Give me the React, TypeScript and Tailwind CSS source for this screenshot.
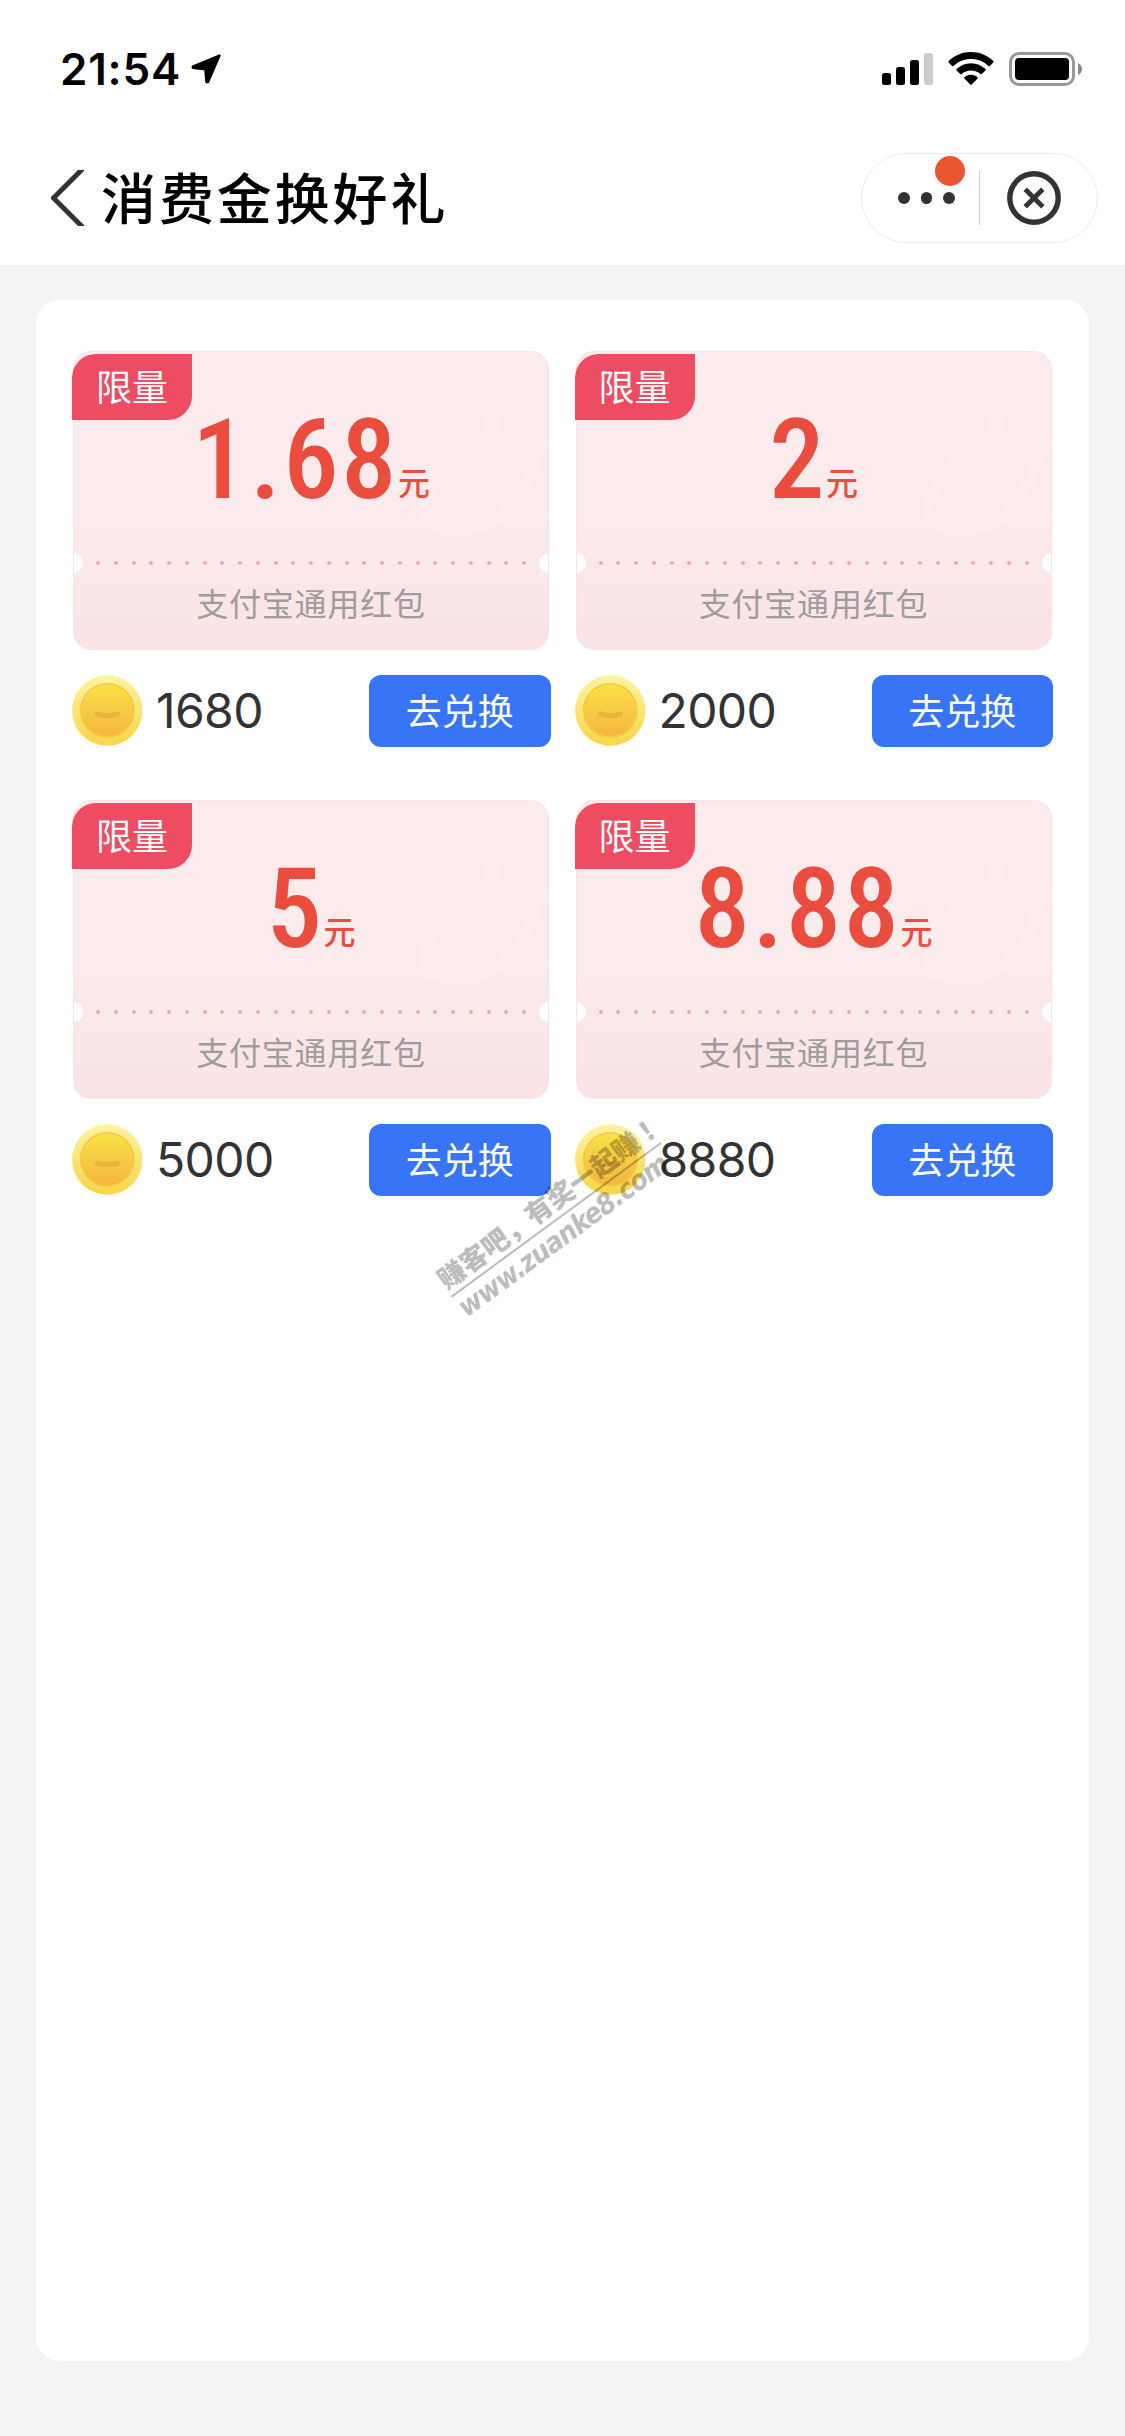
type CouponProps = {
  amount: string;
  title: string;
  coins: number;
};

const coupons: CouponProps[] = [
  { amount: "1.68", title: "支付宝通用红包", coins: 1680 },
  { amount: "2", title: "支付宝通用红包", coins: 2000 },
  { amount: "5", title: "支付宝通用红包", coins: 5000 },
  { amount: "8.88", title: "支付宝通用红包", coins: 8880 },
];

export default function App() {
  return (
    <div className="relative flex h-[2436px] w-[1125px] flex-col overflow-hidden bg-[#f4f4f4] font-['Inter','Noto_Sans_CJK_SC',sans-serif]">
      <header className="h-[265px] bg-white">
        <StatusBar />
        <NavBar />
      </header>
      <main className="mx-9 mt-[35px] h-[2061px] rounded-[24px] bg-white px-9 pt-[51px]">
        <div className="grid grid-cols-2 gap-x-6 gap-y-[53px]">
          {coupons.map((item) => (
            <Coupon key={item.coins} {...item} />
          ))}
        </div>
      </main>
      <Watermark />
    </div>
  );
}

function StatusBar() {
  return (
    <div className="flex h-[138px] items-center justify-between pr-[42px] pl-[60px]">
      <div className="flex items-center">
        <span className="text-[44px] leading-none font-semibold tracking-[0.8px] text-black">21:54</span>
        <svg className="ml-[9px]" width="32" height="32" viewBox="0 0 32 32">
          <path
            d="M29.5 2.5 L18 29 L16.4 29 L15.4 16.2 L2.8 14.8 L2.8 13.6 Z"
            fill="#000"
            stroke="#000"
            strokeWidth="2.4"
            strokeLinejoin="round"
          />
        </svg>
      </div>
      <div className="flex items-center">
        <svg width="51" height="32" viewBox="0 0 51 32">
          <rect x="0" y="20" width="9" height="12" rx="2.5" />
          <rect x="14" y="14" width="9" height="18" rx="2.5" />
          <rect x="28" y="7" width="9" height="25" rx="2.5" />
          <rect x="42" y="0" width="9" height="32" rx="2.5" fill="#ccc" />
        </svg>
        <svg className="ml-[15px]" width="46" height="34" viewBox="0 0 46 34">
          <path d="M23 0 C31.6 0 39.6 3.4 45.3 9 Q46 9.8 45.3 10.6 L41.9 14 Q41.2 14.6 40.5 14 C35.8 9.6 29.6 7 23 7 C16.4 7 10.2 9.6 5.5 14 Q4.8 14.6 4.1 14 L0.7 10.6 Q0 9.8 0.7 9 C6.4 3.4 14.4 0 23 0 Z" />
          <path d="M23 11.2 C28.6 11.2 33.7 13.4 37.4 17 Q38.1 17.8 37.4 18.5 L33.8 22 Q33.1 22.6 32.4 22 C29.9 19.7 26.6 18.4 23 18.4 C19.4 18.4 16.1 19.7 13.6 22 Q12.9 22.6 12.2 22 L8.6 18.5 Q7.9 17.8 8.6 17 C12.3 13.4 17.4 11.2 23 11.2 Z" />
          <path d="M23 22.8 C25.6 22.8 27.9 23.7 29.6 25.2 Q30.2 25.9 29.6 26.6 L23.7 32.5 Q23 33.2 22.3 32.5 L16.4 26.6 Q15.8 25.9 16.4 25.2 C18.1 23.7 20.4 22.8 23 22.8 Z" />
        </svg>
        <svg className="ml-[15px]" width="74" height="34" viewBox="0 0 74 34">
          <rect x="1.5" y="1.5" width="63" height="31" rx="8.5" fill="none" stroke="#999" strokeWidth="3" />
          <rect x="6" y="6" width="54" height="22" rx="4" />
          <path d="M69 11 Q73 13 73 17 Q73 21 69 23 Z" fill="#8a8a8a" />
        </svg>
      </div>
    </div>
  );
}

function NavBar() {
  return (
    <div className="flex h-[120px] items-center justify-between pr-[27px] pl-[51px]">
      <div className="flex items-center">
        <svg width="33" height="56" viewBox="0 0 33 56">
          <path d="M27 0 L33 0 L33 1 L6 28 L33 55 L33 56 L27 56 L0 29 L0 27 Z" fill="#333" />
        </svg>
        <h1 className="ml-[17px] pb-[6px] font-['Noto_Sans_CJK_SC',sans-serif] text-[55px] leading-[60px] font-medium tracking-[2.9px] text-black">
          消费金换好礼
        </h1>
      </div>
      <div className="relative flex h-[90px] w-[237px] items-center rounded-full border border-[#ebebeb]">
        <div className="flex w-[117px] items-center justify-center gap-[11px] pl-[12px]">
          <i className="h-[12px] w-[11.5px] rounded-full bg-[#333]" />
          <i className="h-[12px] w-[11.5px] rounded-full bg-[#333]" />
          <i className="h-[12px] w-[11.5px] rounded-full bg-[#333]" />
        </div>
        <span className="absolute top-[2px] left-[73px] size-[30px] rounded-full bg-[#ea5532]" />
        <span className="h-[54px] w-px bg-[#ccc]" />
        <svg className="ml-[27px]" width="54" height="54" viewBox="0 0 54 54" fill="none" stroke="#333">
          <circle cx="27" cy="27" r="24.2" strokeWidth="5.4" />
          <path d="M18.2 18.2 L35.8 35.8 M35.8 18.2 L18.2 35.8" strokeWidth="4.8" />
        </svg>
      </div>
    </div>
  );
}

function Coupon({ amount, title, coins }: CouponProps) {
  return (
    <div>
      <div className="relative h-[299px] pr-[1.5px] pl-px">
        <div className="relative flex h-full flex-col overflow-hidden rounded-[18px] border border-[#f9e3e4] bg-linear-to-b from-[#fcebec] from-55% to-[#f9e3e5]">
          <AlipayMark />
          <div className="flex h-[202px] items-end justify-center pb-[53px] text-[#ea4d3d]">
            <span className="font-['Roboto',sans-serif] text-[111px] leading-[82px] font-medium tracking-[2.4px] [font-stretch:75%]">
              {amount}
            </span>
            <span className="-ml-px pb-[2px] font-['Noto_Sans_CJK_SC',sans-serif] text-[32px] leading-[36px] font-medium">元</span>
          </div>
          <div className="flex h-[18px] items-center justify-between px-[22px]">
            {Array.from({ length: 25 }, (_, i) => (
              <i key={i} className="h-[3.5px] w-[4px] rounded-full bg-[#f5aba5]" />
            ))}
          </div>
          <p className="mt-[7px] text-center font-['Noto_Sans_CJK_SC',sans-serif] text-[32px] leading-[46px] tracking-[0.8px] text-[#a09c9c]">
            {title}
          </p>
          <span className="absolute top-[201px] -left-[11px] size-[20px] rounded-full bg-white" />
          <span className="absolute top-[201px] -right-[11px] size-[20px] rounded-full bg-white" />
        </div>
        <span className="absolute top-[3px] left-0 flex h-[66px] w-[120px] items-center justify-center rounded-tl-[24px] rounded-br-[24px] bg-[#ed4c63] pb-[5px] font-['Noto_Sans_CJK_SC',sans-serif] text-[36px] leading-none text-white">
          限量
        </span>
      </div>
      <div className="mt-[25px] flex h-[72px] items-center">
        <Coin />
        <span className="ml-[13px] text-[48px] leading-none font-[370] tracking-[-0.6px] text-[#333]">{coins}</span>
        <button className="ml-auto h-[72px] w-[181.5px] rounded-[12px] bg-[#3875f6] pb-[5px] font-['Noto_Sans_CJK_SC',sans-serif] text-[36px] leading-none font-normal text-white">
          去兑换
        </button>
      </div>
    </div>
  );
}

function Coin() {
  return (
    <svg className="mb-[2px] shrink-0" width="71" height="71" viewBox="0 0 71 71">
      <defs>
        <linearGradient id="coinRim" x1="0" y1="0" x2="0" y2="1">
          <stop offset="0" stopColor="#fdf3a0" />
          <stop offset="1" stopColor="#f9d546" />
        </linearGradient>
        <linearGradient id="coinFace" x1="0" y1="0" x2="0" y2="1">
          <stop offset="0" stopColor="#fae246" />
          <stop offset="1" stopColor="#f3b540" />
        </linearGradient>
      </defs>
      <circle cx="35.3" cy="35.5" r="35.2" fill="url(#coinRim)" />
      <circle cx="35.3" cy="35.3" r="26.6" fill="url(#coinFace)" stroke="#f5c944" strokeWidth="1.6" />
      <path d="M25 39 Q35.3 42 45.5 39" fill="none" stroke="#ecb33e" strokeWidth="5" strokeLinecap="round" />
    </svg>
  );
}

// faint logo on the right side of the ticket
function AlipayMark() {
  return (
    <svg className="absolute top-[60px] right-0" width="130" height="130" viewBox="0 0 130 130" fill="none" stroke="#fff" strokeOpacity="0.08">
      <path d="M74 2 V42 M22 32 H130" strokeWidth="19" />
      <path d="M29 46 H118 Q106 84 82 104 Q62 120 38 120 Q8 120 8 96 Q8 68 40 68 Q62 68 130 104" strokeWidth="11" />
    </svg>
  );
}

function Watermark() {
  return (
    <div className="pointer-events-none absolute top-[1184px] left-[426px] w-[260px] rotate-[-36.3deg] text-[#000] opacity-[0.26]">
      <p className="h-[35px] font-['Noto_Sans_CJK_SC',sans-serif] text-[27px] leading-[34px] font-black whitespace-nowrap">
        赚客吧，有奖一起赚<span className="pl-[6px]">！</span>
      </p>
      <div className="h-[1.5px] bg-black" />
      <p className="h-[35px] font-['DejaVu_Sans_Condensed','DejaVu_Sans',sans-serif] text-[28px] leading-[32px] font-bold tracking-[-0.7px] whitespace-nowrap italic">
        www.zuanke8.com
      </p>
    </div>
  );
}
